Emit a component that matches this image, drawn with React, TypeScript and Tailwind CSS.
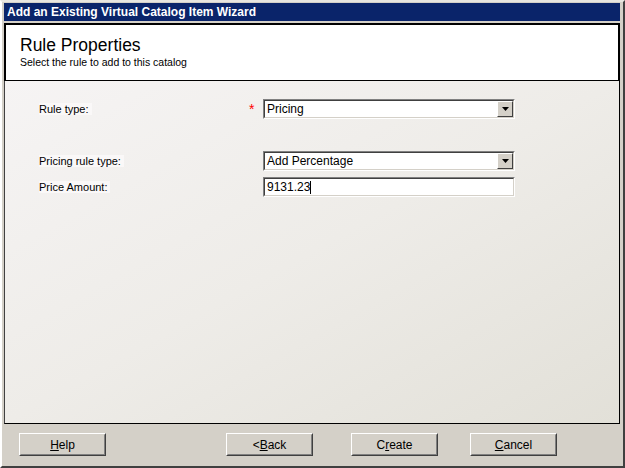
import React from "react";

const font = { fontFamily: '"Liberation Sans", Arial, sans-serif' };

function DropArrow() {
  return (
    <div className="w-[16px] h-[16px] bg-[#d4d0c8] border border-t-white border-l-white border-r-[#404040] border-b-[#404040] flex items-center justify-center">
      <svg width="7" height="4" viewBox="0 0 7 4">
        <path d="M0 0h7L3.5 4z" fill="#000" />
      </svg>
    </div>
  );
}

function Field({ value, combo, caret }: { value: string; combo?: boolean; caret?: boolean }) {
  return (
    <div className="w-[252px] h-[20px] border border-t-[#808080] border-l-[#808080] border-r-white border-b-white">
      <div className="h-full border border-t-[#404040] border-l-[#404040] border-r-[#d4d0c8] border-b-[#d4d0c8] bg-white flex items-center">
        <span className="flex-1 pl-[2px] text-[12px] text-black leading-none flex items-center">
          {value}
          {caret && <span className="inline-block w-px h-[13px] bg-black" />}
        </span>
        {combo && <DropArrow />}
      </div>
    </div>
  );
}

function Button({ children, className = "" }: { children: React.ReactNode; className?: string }) {
  return (
    <div
      className={
        "w-[87px] h-[23px] border border-t-white border-l-white border-r-[#404040] border-b-[#404040] bg-[#d4d0c8] " +
        className
      }
    >
      <div className="h-full border border-transparent border-r-[#808080] border-b-[#808080] flex items-center justify-center text-[12px] text-black">
        {children}
      </div>
    </div>
  );
}

export default function App() {
  return (
    <div
      style={font}
      className="w-[625px] h-[468px] box-border bg-[#d4d0c8] border-2 border-t-[#e8e6e0] border-l-white border-r-[#404040] border-b-[#404040] pt-[1px] pl-[2px] pr-[3px] flex flex-col"
    >
      {/* title bar */}
      <div className="h-[18px] bg-[#0a246a] text-white font-bold text-[12px] pl-[3px] flex items-center">
        Add an Existing Virtual Catalog Item Wizard
      </div>

      {/* header */}
      <div className="mt-[2px] h-[58px] bg-white border-t-2 border-l-2 border-r-2 border-b border-black pl-[14px] pt-[11px]">
        <div className="text-[17.5px] leading-[18px] text-black">Rule Properties</div>
        <div className="mt-[2px] text-[10.5px] leading-[13px] text-black">Select the rule to add to this catalog</div>
      </div>

      {/* content */}
      <div className="h-[343px] border-l border-b border-r border-l-[#404040] border-black bg-gradient-to-br from-[#f6f4f4] via-[#eeece8] to-[#e2e0d8] pl-[34px] pt-[18px]">
        <div className="flex items-center h-[20px]">
          <div className="w-[209px] text-[11px] text-black">
            <span className="bg-[#faf8f8] pr-[3px]">Rule type:</span>
          </div>
          <div className="w-[15px] text-[#ff0000] text-[14px] leading-none self-start pt-[3px] pl-[1px]">*</div>
          <Field value="Pricing" combo />
        </div>

        <div className="flex items-center h-[20px] mt-[32px]">
          <div className="w-[224px] text-[11px] text-black">
            <span className="bg-[#faf8f8] pr-[3px]">Pricing rule type:</span>
          </div>
          <Field value="Add Percentage" combo />
        </div>

        <div className="flex items-center h-[20px] mt-[6px]">
          <div className="w-[224px] text-[11px] text-black">
            <span className="bg-[#faf8f8] pr-[3px]">Price Amount:</span>
          </div>
          <Field value="9131.23" caret />
        </div>
      </div>

      {/* buttons */}
      <div className="flex-1 flex items-start pt-[9px]">
        <Button className="ml-[15px]">
          <span>
            <u>H</u>elp
          </span>
        </Button>
        <Button className="ml-[120px]">
          <span>
            &lt;<u>B</u>ack
          </span>
        </Button>
        <Button className="ml-[38px]">
          <span>
            C<u>r</u>eate
          </span>
        </Button>
        <Button className="ml-[32px]">
          <span>
            <u>C</u>ancel
          </span>
        </Button>
      </div>
    </div>
  );
}
